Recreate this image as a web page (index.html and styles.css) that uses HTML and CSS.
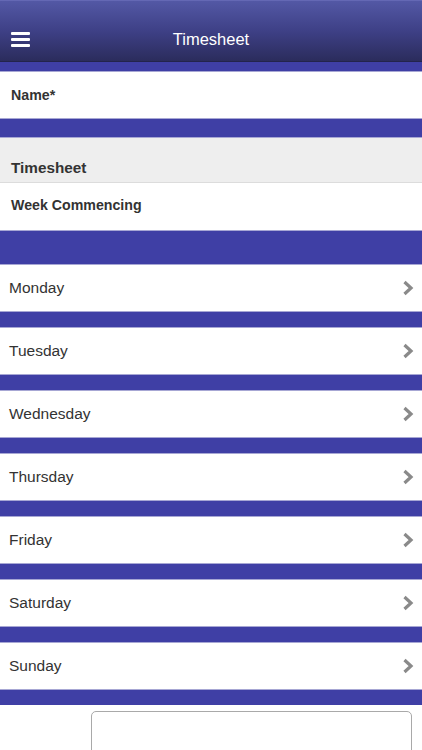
FILE: index.html
```html
<!DOCTYPE html>
<html>
<head>
<meta charset="utf-8">
<link rel="stylesheet" href="styles.css">
</head>
<body>
<header class="topbar">
  <svg class="menu" width="19" height="15" viewBox="0 0 19 15">
    <rect x="0" y="0" width="19" height="3" rx="1" fill="#fff"/>
    <rect x="0" y="6" width="19" height="3" rx="1" fill="#fff"/>
    <rect x="0" y="12" width="19" height="3" rx="1" fill="#fff"/>
  </svg>
  <div class="title">Timesheet</div>
</header>
<div class="band b9"></div>
<div class="row label">Name*</div>
<div class="band b19"></div>
<div class="section">Timesheet</div>
<div class="row label week">Week Commencing</div>
<div class="band b33"></div>
<div class="row day"><span>Monday</span><svg class="chev" width="12" height="16" viewBox="0 0 12 16"><polyline points="2.5,2 9,8 2.5,14" fill="none" stroke="#8a8a8a" stroke-width="3.2"/></svg></div>
<div class="band b16"></div>
<div class="row day"><span>Tuesday</span><svg class="chev" width="12" height="16" viewBox="0 0 12 16"><polyline points="2.5,2 9,8 2.5,14" fill="none" stroke="#8a8a8a" stroke-width="3.2"/></svg></div>
<div class="band b16"></div>
<div class="row day"><span>Wednesday</span><svg class="chev" width="12" height="16" viewBox="0 0 12 16"><polyline points="2.5,2 9,8 2.5,14" fill="none" stroke="#8a8a8a" stroke-width="3.2"/></svg></div>
<div class="band b16"></div>
<div class="row day"><span>Thursday</span><svg class="chev" width="12" height="16" viewBox="0 0 12 16"><polyline points="2.5,2 9,8 2.5,14" fill="none" stroke="#8a8a8a" stroke-width="3.2"/></svg></div>
<div class="band b16"></div>
<div class="row day"><span>Friday</span><svg class="chev" width="12" height="16" viewBox="0 0 12 16"><polyline points="2.5,2 9,8 2.5,14" fill="none" stroke="#8a8a8a" stroke-width="3.2"/></svg></div>
<div class="band b16"></div>
<div class="row day"><span>Saturday</span><svg class="chev" width="12" height="16" viewBox="0 0 12 16"><polyline points="2.5,2 9,8 2.5,14" fill="none" stroke="#8a8a8a" stroke-width="3.2"/></svg></div>
<div class="band b16"></div>
<div class="row day"><span>Sunday</span><svg class="chev" width="12" height="16" viewBox="0 0 12 16"><polyline points="2.5,2 9,8 2.5,14" fill="none" stroke="#8a8a8a" stroke-width="3.2"/></svg></div>
<div class="band b16"></div>
<div class="notes">
  <div class="textbox"></div>
</div>
</body>
</html>
```
FILE: styles.css
```css
html, body {
  margin: 0;
  padding: 0;
  background: #ffffff;
  font-family: "Liberation Sans", Arial, sans-serif;
  color: #333333;
  overflow: hidden;
}
.topbar {
  height: 46px;
  padding-top: 14px;
  border-top: 1px solid #6468b4;
  background: linear-gradient(to bottom, #5358a5 0%, #3e4086 50%, #2b2c5c 100%);
  border-bottom: 1px solid #23244c;
  display: flex;
  align-items: center;
  justify-content: center;
  position: relative;
}
.menu {
  position: absolute;
  left: 11px;
  top: 31px;
  display: block;
}
.title {
  color: #ffffff;
  font-size: 16.5px;
  line-height: 20px;
  margin-top: 1px;
}
.band {
  background: #3f3fa5;
}
.b9 { height: 9px; }
.b19 { height: 18px; }
.b33 { height: 33px; }
.b16 { height: 15px; }
.row {
  background: #ffffff;
  border-top: 1px solid #a7a7d4;
  border-bottom: 1px solid #a7a7d4;
  display: flex;
  align-items: center;
  box-sizing: border-box;
}
.label {
  height: 48px;
  padding-left: 11px;
  font-weight: bold;
  font-size: 14.2px;
  color: #333333;
}
.section {
  height: 46px;
  background: #eeeeee;
  border-top: 1px solid #a7a7d4;
  border-bottom: 1px solid #dcdcdc;
  box-sizing: border-box;
  display: flex;
  align-items: flex-end;
  padding: 0 0 5px 11px;
  line-height: 18px;
  font-weight: bold;
  font-size: 15.3px;
  color: #333333;
}
.week {
  border-top: none;
  height: 48px;
  padding-bottom: 4px;
}
.day {
  height: 48px;
  padding: 0 8px 0 9px;
  justify-content: space-between;
  font-size: 15.5px;
  color: #333333;
}
.chev {
  display: block;
  margin-top: -1px;
}
.notes {
  padding: 6px 10px 0 91px;
}
.textbox {
  height: 60px;
  border: 1px solid #a9a9a9;
  border-radius: 5px;
  background: #ffffff;
}
```
